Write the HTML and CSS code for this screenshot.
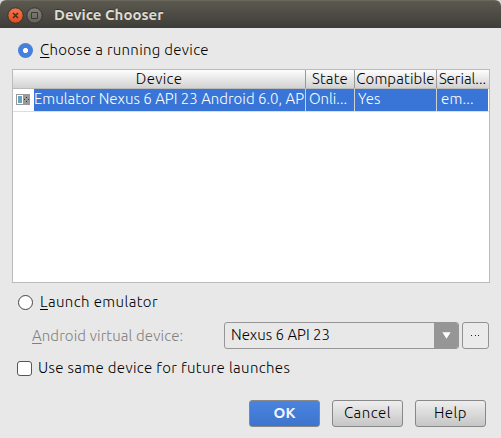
FILE: index.html
```html
<!DOCTYPE html>
<html lang="en">
<head>
<meta charset="utf-8">
<title>Device Chooser</title>
<link rel="stylesheet" href="styles.css">
</head>
<body>
<div class="window">
  <header class="titlebar">
    <svg class="win-btn" viewBox="0 0 17 17"><defs><linearGradient id="c" x2="0" y2="1"><stop stop-color="#f4784e"/><stop offset="1" stop-color="#dd4c1d"/></linearGradient></defs><circle cx="8.5" cy="8.5" r="7.7" fill="url(#c)" stroke="#35342f"/><path d="M6 6l5 5M11 6l-5 5" stroke="#4a2418" stroke-width="1.4"/></svg>
    <svg class="win-btn" viewBox="0 0 17 17"><defs><linearGradient id="m" x2="0" y2="1"><stop stop-color="#85827a"/><stop offset="1" stop-color="#62605a"/></linearGradient></defs><circle cx="8.5" cy="8.5" r="7.7" fill="url(#m)" stroke="#35342f"/><path d="M5.5 5.5h6v6h-6z" fill="none" stroke="#3a3934"/></svg>
    <h1 class="title"><span>Device Chooser</span></h1>
  </header>
  <main class="body">
    <label class="option running"><i class="radio on"></i><span class="t-run"><u>C</u>hoose a running device</span></label>
    <div class="table">
      <div class="row head">
        <div class="cell device"><span class="t-device">Device</span></div>
        <div class="cell"><span class="t-state">State</span></div>
        <div class="cell"><span class="t-comp">Compatible</span></div>
        <div class="cell"><span class="t-serial">Serial...</span></div>
      </div>
      <div class="row data">
        <div class="icon"><svg width="14" height="11" viewBox="0 0 14 11"><path fill="#999" d="M0 0h14v11H0z"/><path fill="#fff" d="M1 1h6v9H1z"/><path fill="#68a2bd" d="M2 2h4v7H2z"/><path fill="#333" d="M10 3h1v1h-1zM8 5h1v1H8zM12 5h1v1h-1zM10 7h1v1h-1z"/></svg></div>
        <div class="cell name"><span class="t-name">Emulator Nexus 6 API 23 Android 6.0, AP</span></div>
        <div class="cell online"><span class="t-online">Onli...</span></div>
        <div class="cell yes"><span class="t-yes">Yes</span></div>
        <div class="cell em"><span class="t-em">em...</span></div>
      </div>
    </div>
    <label class="option launch"><i class="radio"></i><span class="t-launch"><u>L</u>aunch emulator</span></label>
    <div class="avd">
      <span class="avd-label"><span class="t-avd"><u>A</u>ndroid virtual device:</span></span>
      <div class="select"><span class="t-select">Nexus 6 API 23</span><b class="arrow"><svg width="9" height="7" viewBox="0 0 9 7"><path d="M.3.3h8.4L4.5 6.7z" fill="#fff"/></svg></b></div>
      <button class="more"><svg width="9" height="2" viewBox="0 0 9 2"><path d="M0 0h1v1H0zM4 0h1v1H4zM7 0h1v1H7z" fill="#222"/></svg></button>
    </div>
    <label class="option same"><i class="check"></i><span class="t-same">Use same device for future launches</span></label>
    <footer class="actions">
      <button class="btn primary"><span>OK</span></button>
      <button class="btn"><span class="t-cancel">Cancel</span></button>
      <button class="btn"><span class="t-help">Help</span></button>
    </footer>
  </main>
</div>
</body>
</html>
```
FILE: styles.css
```css
* { box-sizing: border-box; }
body { margin: 0; background: #d8d8d6; font: 300 15px/20px "Ubuntu Light", Ubuntu, "Open Sans", "Noto Sans", sans-serif; color: #000; }
.window { width: 501px; height: 438px; background: #e8e8e8; border-radius: 6px 6px 0 0; overflow: hidden; }
.titlebar { height: 28px; display: flex; align-items: center; padding: 1px 0 0 7px; gap: 2px; background: linear-gradient(#5c594f, #3e3d38); border-top: 1px solid #6a675e; }
.win-btn { width: 17px; height: 17px; }
.title { margin: 0 0 0 9px; font-family: Ubuntu, "Open Sans", sans-serif; font-size: 15px; line-height: 20px; font-weight: 700; color: #dfdbd2; text-shadow: 0 -1px #35342f; }
.body { padding: 12px 11px 0 12px; }
span { white-space: nowrap; }
.t-run { letter-spacing: .31px; }
.t-launch { letter-spacing: .4px; }
.t-avd { letter-spacing: .13px; }
.t-same { letter-spacing: .35px; }
.t-device { letter-spacing: .3px; }
.t-state, .t-comp { letter-spacing: .15px; }
.t-name { letter-spacing: .02px; }
.t-help { letter-spacing: .5px; }
.t-cancel { letter-spacing: .5px; }
.t-em { letter-spacing: .2px; }
u { text-decoration: underline; text-decoration-thickness: 1px; text-underline-offset: 2px; }
.option { display: flex; align-items: center; height: 20px; }
.running, .launch { padding-left: 6px; gap: 7px; }
.radio { width: 15px; height: 15px; border-radius: 50%; border: 1px solid #444; background: #fff; }
.radio.on { border: 0; background: radial-gradient(circle, #fff 2.2px, transparent 2.9px), #4680dc; }
.table { margin-top: 9px; width: 478px; height: 214px; border: 1px solid #bbb; background: #fff; }
.row { display: grid; grid-template-columns: 293px 49px 82px 51px; padding-right: 1px; }
.head { height: 18px; line-height: 18px; background: linear-gradient(#fdfdfd, #d2d2d2); }
.head .cell { display: flex; justify-content: center; border-right: 1px solid #999; }
.head .cell:last-child { border: 0; }
.data { grid-template-columns: 21px 272px 49px 82px 51px; height: 24px; border-top: 1px solid #bbb; border-bottom: 1px solid #ddd; }
.icon { display: flex; align-items: center; padding: 0 0 2px 3px; margin-top: 1px; }
.data .cell { background: #3875d7; color: #fff; border-right: 1px solid #d0d0d0; line-height: 20px; overflow: hidden; padding-left: 3px; }
.data .name { padding-left: 0; }
.data .em { padding-left: 4px; border: 0; }
.launch { margin-top: 9px; }
.avd { display: flex; height: 27px; margin-top: 10px; padding-left: 20px; }
.avd-label { width: 192px; line-height: 27px; color: #808080; }
.select { width: 235px; height: 27px; border: 1px solid #969696; border-radius: 3px; display: flex; justify-content: space-between; line-height: 24px; padding-left: 6px; overflow: hidden; }
.arrow { width: 24px; background: #969696; display: flex; align-items: center; justify-content: center; }
.more { width: 27px; height: 27px; margin-left: 3px; padding: 0; border: 1px solid #929292; border-radius: 3px; background: #ebebeb; display: flex; align-items: center; justify-content: center; }
.same { margin-top: 9px; padding-left: 5px; gap: 6px; }
.check { width: 15px; height: 15px; border: 1px solid #555; border-radius: 3px; background: #fff; }
.actions { display: flex; justify-content: flex-end; gap: 12px; margin-top: 22px; padding-right: 4px; }
.btn { width: 71px; height: 27px; padding: 0 0 2px; border: 1px solid #888; border-radius: 3px; background: linear-gradient(#eee, #c6c6c6); font: inherit; color: #000; }
.primary { background: linear-gradient(#4a84e0, #3d75cd); color: #f0f4fc; font-family: Ubuntu, "Open Sans", sans-serif; font-weight: 700; }
```
